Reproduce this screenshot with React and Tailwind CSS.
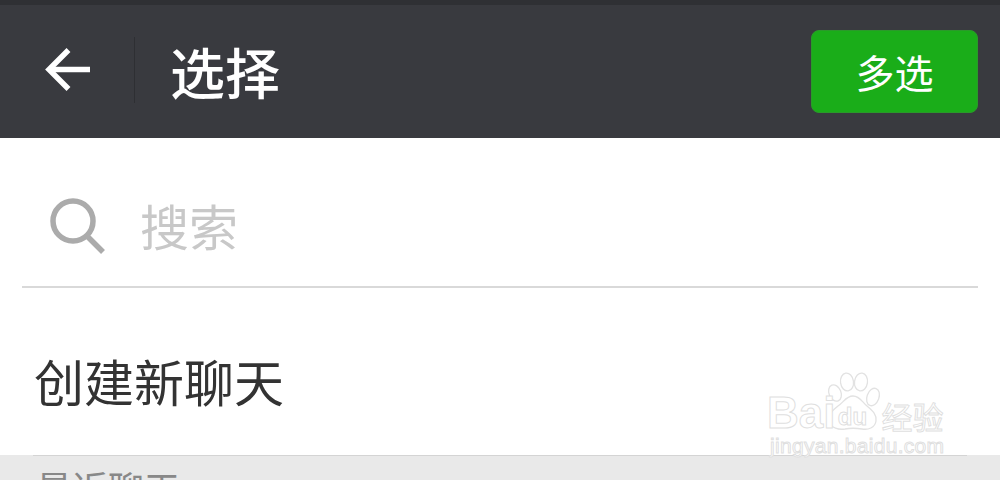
import React from 'react';

const Watermark = () => (
  <div className="absolute left-[767px] top-[372px] flex flex-col text-white whitespace-nowrap [-webkit-text-stroke:1px_#dfdfdf]">
    <div className="flex items-end h-[62px]">
      <span className="relative z-10 -mr-[10px] -mb-[1px] font-['Liberation_Sans',sans-serif] font-bold text-[44px] leading-[44px]">Bai</span>
      <div className="relative w-[60px] h-[62px] shrink-0">
        <svg width="60" height="62" viewBox="0 0 60 62" fill="#fff" stroke="#e2e2e2" strokeWidth="1.3">
          <ellipse cx="10" cy="21" rx="6" ry="8.5" transform="rotate(-22 10 21)" />
          <ellipse cx="22" cy="10" rx="6.5" ry="9" transform="rotate(-8 22 10)" />
          <ellipse cx="36" cy="10" rx="6.5" ry="9" transform="rotate(8 36 10)" />
          <ellipse cx="48" cy="25" rx="6" ry="9" transform="rotate(20 48 25)" />
          <path d="M28 24c7 0 9 6 14 10 6 5 10 9 9 15-1 7-8 9-14 8-6-1-12-1-17 0-6 1-14-1-16-7-2-7 3-11 9-16 6-4 8-10 15-10z" />
        </svg>
        <span className="absolute inset-0 flex items-end justify-center pb-[4px] pr-[6px] font-['Liberation_Sans',sans-serif] font-bold text-[24px] leading-[26px]">du</span>
      </div>
      <span className="-ml-[4px] -mb-[2px] font-['Noto_Sans_CJK_SC',sans-serif] text-[31px] leading-[40px]">经验</span>
    </div>
    <span className="ml-[3px] font-['Liberation_Sans',sans-serif] text-[21px] leading-[24px] tracking-[0.3px]">jingyan.baidu.com</span>
  </div>
);

export default function App() {
  return (
    <div className="relative w-[1000px] h-[480px] overflow-hidden bg-white font-['Noto_Sans_CJK_SC','Noto_Sans',sans-serif]">
      <div className="h-[5px] bg-[#2f3034]" />
      <header className="h-[133px] bg-[#393a3f] flex items-center pl-[44px] pr-[22px]">
        <div className="flex items-center gap-[42px] pb-[3px]">
          <svg width="48" height="46" viewBox="0 0 48 46" fill="none" stroke="#fff" strokeWidth="5.5" className="shrink-0">
            <path d="M46 22.5H6" />
            <path d="M24.5 3 5 22.5 24.5 42" />
          </svg>
          <div className="flex items-center gap-[35px]">
            <div className="w-px h-[66px] bg-[#2e2f33]" />
            <h1 className="text-[55px] leading-none text-white font-medium">选择</h1>
          </div>
        </div>
        <button className="ml-auto w-[167px] h-[83px] rounded-lg bg-[#1aad19] border border-[#2a9a2a] text-white text-[39px] leading-none">多选</button>
      </header>

      <div className="mx-[22px] h-[150px] border-b-2 border-[#d9d9d9] flex items-center gap-[34px] pl-[28px] pt-[24px]">
        <svg width="56" height="58" viewBox="0 0 56 58" fill="none" stroke="#ababab" strokeWidth="5.5" className="shrink-0 mt-[6px]">
          <circle cx="23" cy="23" r="20" />
          <path d="M37 38 53 54" />
        </svg>
        <span className="text-[49px] leading-none text-[#c8c8c8]">搜索</span>
      </div>

      <div className="h-[167px] flex items-center pl-[34px] pt-[16px]">
        <span className="text-[50px] leading-none text-[#333333]">创建新聊天</span>
      </div>

      <div className="bg-[#e9e9e9] h-[40px] pl-[36px] relative">
        <div className="absolute left-[33px] right-[33px] top-0 h-px bg-[#d4d4d4]" />
        <span className="block pt-[14px] text-[36px] leading-none text-[#888888]">最近聊天</span>
      </div>

      <Watermark />
    </div>
  );
}
